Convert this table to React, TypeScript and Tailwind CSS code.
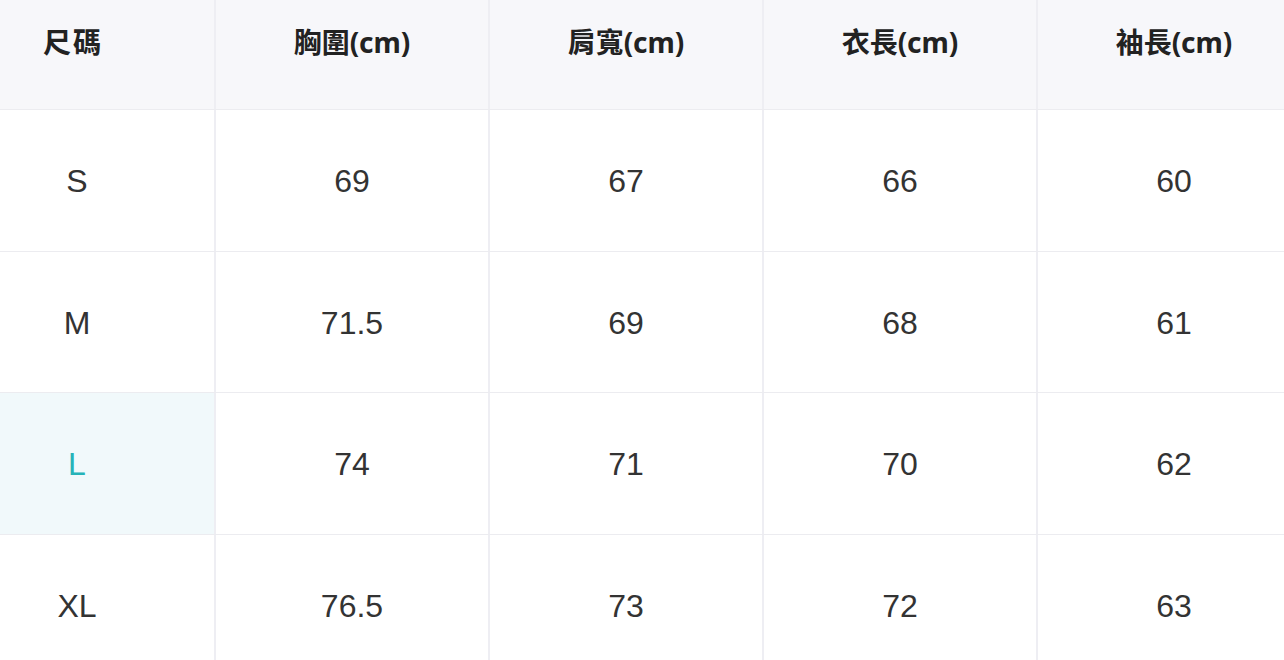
const headers = ["尺碼", "胸圍(cm)", "肩寬(cm)", "衣長(cm)", "袖長(cm)"];

const rows = [
  { size: "S", values: ["69", "67", "66", "60"] },
  { size: "M", values: ["71.5", "69", "68", "61"] },
  { size: "L", values: ["74", "71", "70", "62"], active: true },
  { size: "XL", values: ["76.5", "73", "72", "63"] },
];

export default function App() {
  return (
    <div className="w-[1284px] h-[660px] overflow-hidden bg-white">
      {/* table is scrolled a little to the right, so the first column is cut */}
      <div className="w-[1370px] -ml-[60px]">
        <div className="grid grid-cols-5 h-[110px] bg-[#f7f7fa] border-b border-[#ececf0]">
          {headers.map((h, i) => (
            <div
              key={h}
              className={`flex justify-center pt-[22px] text-[28px] leading-[40px] font-bold text-[#222] font-['Noto_Sans','Noto_Sans_CJK_TC',sans-serif] ${i > 0 ? "border-l-2 border-[#eeeef3]" : "pr-[8px] tracking-[2px]"}`}
            >
              {h}
            </div>
          ))}
        </div>
        {rows.map((r) => (
          <div key={r.size} className="grid grid-cols-5 h-[141.5px] border-b border-[#ececf0]">
            <Cell active={r.active}>{r.size}</Cell>
            {r.values.map((v, i) => (
              <Cell key={i} bordered>
                {v}
              </Cell>
            ))}
          </div>
        ))}
      </div>
    </div>
  );
}

function Cell({ children, active, bordered }: { children: React.ReactNode; active?: boolean; bordered?: boolean }) {
  return (
    <div
      className={`flex items-center justify-center pt-[2px] text-[32px] font-['Liberation_Sans',Arial,sans-serif] ${
        active ? "bg-[#f1f9fb] text-[#26b3b8]" : "text-[#333]"
      } ${bordered ? "border-l-2 border-[#eeeef3]" : ""}`}
    >
      {children}
    </div>
  );
}
